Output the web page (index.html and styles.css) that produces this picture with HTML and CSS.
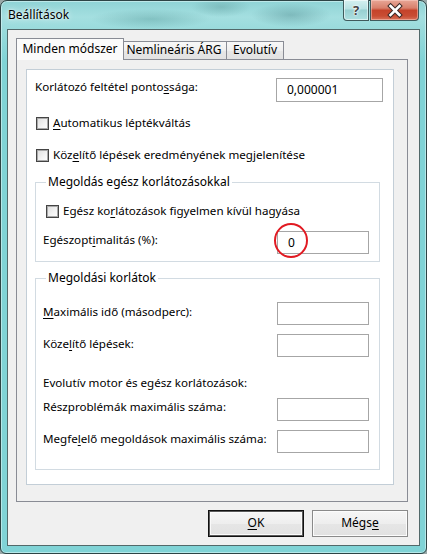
FILE: index.html
```html
<!DOCTYPE html>
<html lang="hu">
<head>
<meta charset="utf-8">
<title>Beállítások</title>
<link rel="stylesheet" href="styles.css">
</head>
<body>
<div class="window">
  <div class="titlebar">
    <span class="title">Beállítások</span>
    <div class="caption-buttons">
      <div class="cap-btn help">?</div>
      <div class="cap-btn close">
        <svg width="47" height="19" viewBox="0 0 47 19">
          <path d="M19.5 5 L28.5 14 M28.5 5 L19.5 14" stroke="#3b2a28" stroke-width="4.6" stroke-linecap="square" fill="none"/>
          <path d="M19.5 5 L28.5 14 M28.5 5 L19.5 14" stroke="#ffffff" stroke-width="2.6" stroke-linecap="square" fill="none"/>
        </svg>
      </div>
    </div>
  </div>

  <div class="client">
    <div class="tabs">
      <div class="tab active">Minden módszer</div>
      <div class="tab t2">Nemlineáris ÁRG</div>
      <div class="tab t3">Evolutív</div>
    </div>

    <div class="panel">
      <div class="page">
        <div class="row first">
          <span class="label">Korlátozó feltétel ponto<u>s</u>sága:</span>
          <div class="input wide">0,000001</div>
        </div>

        <div class="check c1"><span class="box"></span><span><u>A</u>utomatikus léptékváltás</span></div>
        <div class="check c2"><span class="box"></span><span>Köz<u>e</u>lítő lépések eredményének megjelenítése</span></div>

        <fieldset class="group g1">
          <legend>Megoldás egész korlátozásokkal</legend>
          <div class="check c3"><span class="box"></span><span>Egész ko<u>r</u>látozások figyelmen kívül hagyása</span></div>
          <div class="row r-opt">
            <span class="label">Egészopt<u>i</u>malitás (%):</span>
            <div class="input marked">0<span class="mark"></span></div>
          </div>
        </fieldset>

        <fieldset class="group g2">
          <legend>Megoldási korlátok</legend>
          <div class="row ra">
            <span class="label"><u>M</u>aximális idő (másodperc):</span>
            <div class="input"></div>
          </div>
          <div class="row rb">
            <span class="label">Köze<u>l</u>ítő lépések:</span>
            <div class="input"></div>
          </div>
          <div class="note">Evolutív motor és egész korlátozások:</div>
          <div class="row rc">
            <span class="label">Részproblémák maximális száma:</span>
            <div class="input"></div>
          </div>
          <div class="row rd">
            <span class="label">Megfe<u>l</u>elő megoldások maximális száma:</span>
            <div class="input"></div>
          </div>
        </fieldset>
      </div>
    </div>

    <div class="buttons">
      <div class="btn default"><u>O</u>K</div>
      <div class="btn">Mégs<u>e</u></div>
    </div>
  </div>
</div>
</body>
</html>
```

FILE: styles.css
```css
* {
  box-sizing: border-box;
}

html,
body {
  margin: 0;
  padding: 0;
}

body {
  width: 427px;
  height: 554px;
  overflow: hidden;
  background: #9aa8a8;
  font-family: "Noto Sans", "Open Sans", sans-serif;
  font-size: 11.6px;
  color: #000;
}

u {
  text-decoration: underline;
  text-underline-offset: 2px;
}

/* ---------- window frame ---------- */

.window {
  width: 427px;
  height: 554px;
  display: flex;
  flex-direction: column;
  border: 1px solid #2d4445;
  border-radius: 7px 7px 6px 6px;
  background:
    radial-gradient(ellipse 60px 10px at 150px 18px, rgba(70, 140, 140, 0.35), transparent),
    radial-gradient(ellipse 40px 12px at 290px 14px, rgba(60, 120, 125, 0.35), transparent),
    radial-gradient(ellipse 30px 10px at 220px 6px, rgba(70, 130, 130, 0.3), transparent),
    linear-gradient(180deg, #8fd3d5 0px, #a4dfe0 16px, #9adbdc 28px, #80d3d6 60px, #80d3d6 100%);
  box-shadow: inset 0 0 0 1px rgba(225, 250, 250, 0.55);
}

.titlebar {
  height: 28px;
  flex: none;
  display: flex;
  justify-content: space-between;
  align-items: flex-start;
  padding: 0 7px 0 7px;
}

.title {
  margin-top: 6px;
  font-size: 12px;
  line-height: 16px;
  color: #000;
  text-shadow: 0 0 6px rgba(255, 255, 255, 0.9), 0 0 2px rgba(255, 255, 255, 0.9);
}

.caption-buttons {
  display: flex;
  gap: 1px;
  margin-top: -1px;
}

.cap-btn {
  height: 21px;
  border: 1px solid #3f5a5c;
  border-top: none;
  display: flex;
  align-items: center;
  justify-content: center;
}

.help {
  width: 26px;
  border-radius: 0 0 0 4px;
  background: linear-gradient(180deg, #d5f0f0 0%, #b8e2e3 45%, #97cfd1 50%, #aee0e1 100%);
  box-shadow: inset 0 0 0 1px rgba(255, 255, 255, 0.55);
  font-weight: bold;
  font-size: 13px;
  line-height: 18px;
  color: #444;
  text-shadow: 0 0 1px #fff, 0 0 2px #fff, 0 0 3px #fff;
}

.close {
  width: 49px;
  border-radius: 0 0 4px 0;
  background: linear-gradient(180deg, #e8a797 0%, #d8806c 40%, #c5432a 52%, #c84d33 80%, #d9735a 100%);
  box-shadow: inset 0 0 0 1px rgba(255, 220, 210, 0.45);
}

/* ---------- client area ---------- */

.client {
  flex: 1;
  margin: 0 6px 7px 6px;
  border: 1px solid #52696a;
  background: #f0f0f0;
  padding: 8px 11px 8px 8px;
  display: flex;
  flex-direction: column;
}

/* tab strip */

.tabs {
  display: flex;
  align-items: flex-end;
  height: 21px;
  font-size: 12px;
}

.tab {
  height: 18px;
  padding-top: 0;
  line-height: 16px;
  text-align: center;
  white-space: nowrap;
  border: 1px solid #898c95;
  border-left: none;
  border-bottom: none;
  background: linear-gradient(180deg, #f8f8f8 0%, #efefef 50%, #e7e7e7 51%, #e2e2e2 100%);
}

.tab.active {
  position: relative;
  z-index: 1;
  width: 108px;
  height: 22px;
  margin-bottom: -1px;
  padding-top: 2px;
  border-left: 1px solid #898c95;
  background: #fbfbfb;
}

.tab.t2 {
  width: 103px;
  padding-right: 2px;
}

.tab.t3 {
  width: 57px;
}

.panel {
  height: 443px;
  border: 1px solid #898c95;
  background: #f0f0f0;
  padding: 9px 13px 16px 9px;
}

.page {
  border: 1px solid #c3ced7;
  background: #fff;
  padding: 0 10px 14px 8px;
}

/* rows: label on the left, edit box on the right */

.row {
  display: flex;
  justify-content: space-between;
  align-items: flex-start;
}

.label {
  line-height: 18px;
  white-space: nowrap;
}

.input {
  width: 92px;
  height: 23px;
  border: 1px solid #a6a6a6;
  background: #fff;
  padding-left: 10px;
  line-height: 21px;
  font-size: 12px;
}

.input.wide {
  width: 107px;
  height: 24px;
  line-height: 22px;
}

.input.marked {
  position: relative;
}

.mark {
  position: absolute;
  left: -4px;
  top: -9px;
  width: 34px;
  height: 35px;
  border: 2.6px solid #e11a22;
  border-radius: 50%;
}

.row.first {
  margin-top: 8px;
}

/* checkboxes */

.check {
  display: flex;
  align-items: center;
  gap: 4px;
  line-height: 16px;
  height: 16px;
  white-space: nowrap;
}

.box {
  width: 13px;
  height: 13px;
  flex: none;
  margin-left: 1px;
  border: 1px solid #444;
  background: linear-gradient(135deg, #dedede 0%, #f4f4f4 60%, #ffffff 100%);
  box-shadow: inset 0 0 0 1px #a9a9a9;
}

.check.c1 {
  margin-top: 13px;
}

.check.c2 {
  margin-top: 16px;
}

/* group boxes */

.group {
  margin: 0 3px 0 0;
  min-inline-size: 0;
  border: 1px solid #d2dbe2;
  padding: 0 10px 7px 7px;
}

.group legend {
  margin-left: 3px;
  padding: 0 2px;
  line-height: 16px;
  font-size: 12px;
}

.group.g1 {
  margin-top: 11px;
}

.check.c3 {
  margin-top: 13px;
  margin-left: 2px;
}

.row.r-opt {
  margin-top: 12px;
}

.group.g2 {
  margin-top: 8px;
  padding-bottom: 16px;
}

.row.ra {
  margin-top: 16px;
}

.row.ra .label,
.row.rb .label {
  padding-top: 1px;
}

.row.rb {
  margin-top: 9px;
}

.note {
  margin-top: 17px;
  line-height: 18px;
}

.row.rc {
  margin-top: 6px;
}

.row.rd {
  margin-top: 9px;
}

/* dialog buttons */

.buttons {
  margin-top: 8px;
  display: flex;
  justify-content: flex-end;
  gap: 8px;
  font-size: 12px;
}

.btn {
  width: 96px;
  height: 27px;
  border: 1px solid #8a8a8a;
  background: linear-gradient(180deg, #f6f6f6 0%, #eeeeee 50%, #e6e6e6 51%, #e1e1e1 100%);
  box-shadow: inset 0 0 0 1px #fcfcfc;
  text-align: center;
  line-height: 24px;
}

.btn.default {
  border: 1px solid #101010;
  box-shadow: inset 0 0 0 1px #5a5a5a, inset 0 0 0 2px #fafafa;
}
```
